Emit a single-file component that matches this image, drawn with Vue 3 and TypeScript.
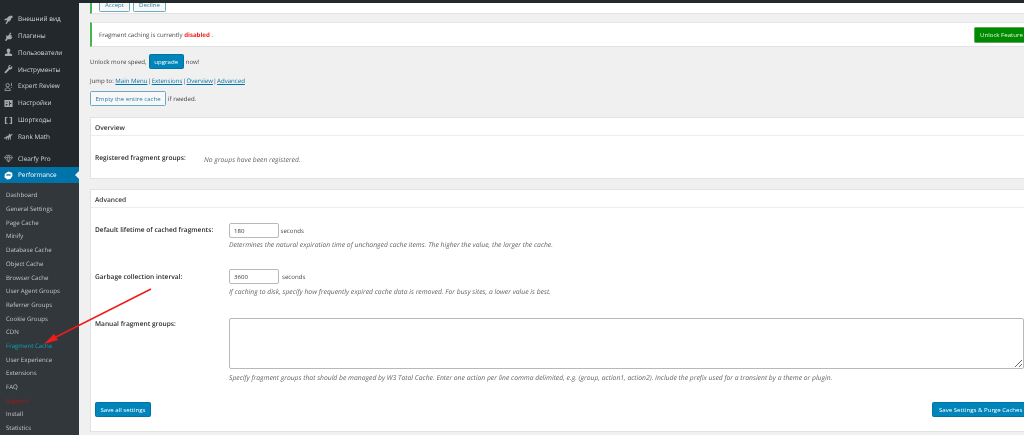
<script setup lang="ts">
// top level menu entries, icon is the key of an svg drawn below
const topMenu = [
  { label: 'Внешний вид', icon: 'brush' },
  { label: 'Плагины', icon: 'plug' },
  { label: 'Пользователи', icon: 'user' },
  { label: 'Инструменты', icon: 'wrench' },
  { label: 'Expert Review', icon: 'expert' },
  { label: 'Настройки', icon: 'settings' },
  { label: 'Шорткоды', icon: 'brackets' },
  { label: 'Rank Math', icon: 'rank' }
]

const subMenu = [
  'Dashboard', 'General Settings', 'Page Cache', 'Minify', 'Database Cache', 'Object Cache',
  'Browser Cache', 'User Agent Groups', 'Referrer Groups', 'Cookie Groups', 'CDN', 'Fragment Cache',
  'User Experience', 'Extensions', 'FAQ', 'Support', 'Install', 'Statistics'
]
</script>

<template>
  <div class="page">
    <aside class="sidebar">
      <ul class="menu">
        <li v-for="item in topMenu" :key="item.label" class="menu-item">
          <svg class="icon" viewBox="0 0 20 20" fill="#a7aaad">
            <path v-if="item.icon === 'brush'" d="M19 3l-3-2-7 3-2 3-6 2 1 3 4-1 1 2-4 6 3 1 4-6 2 1 1-3 3-1-1-3 4-2z" />
            <path v-else-if="item.icon === 'plug'" d="M13 1l3 1-2 5 4 1-2 3 3 1-4 4H8l-3 4-3-1 3-5V7l4 2 1-3 1 1 2-5z" />
            <path v-else-if="item.icon === 'user'" d="M10 1a4 4 0 0 1 4 4.500c0 2-1 3.700-2 4.300v1.700l6 2.500v4H2v-4l6-2.500V9.800c-1-.6-2-2.300-2-4.300A4 4 0 0 1 10 1z" />
            <path v-else-if="item.icon === 'wrench'" d="M18 2l-3.500 3.500-2-.5-.5-2 3.500-2.500c-3-.8-5.800.6-6 3.500 0 .9 0 1.500.3 2l-7.800 9c-.9 1.200-.8 2.200 0 2.800.8.700 1.800.7 2.700-.2l8.300-8c3 .8 5.500-1.700 5.500-4.700 0-1-.2-2.200-.5-3.400z" />
            <g v-else-if="item.icon === 'expert'" fill="none" stroke="#a7aaad" stroke-width="1.800">
              <circle cx="8" cy="7" r="3.800" />
              <path d="M2 19c0-4 2-6 6-6s6 2 6 6zM16.500 2v7M16.500 11v2" />
            </g>
            <path v-else-if="item.icon === 'settings'" fill-rule="evenodd" d="M1 2h18v16H1zM4 6v2h4V6zm7-1v4h1v1h-1v5h2v-4h3V9h-3V5zM4 11v4h2v-2h2v-2z" />
            <path v-else-if="item.icon === 'brackets'" d="M2 2h6v2H5v12h3v2H2zM12 2h6v16h-6v-2h3V4h-3z" />
            <path v-else-if="item.icon === 'rank'" d="M0 13l5-2 1-3 3 2 3-7 2 3 6-2-5 6v7h-2v-5h-2v5H9v-4H7v4H5v-3l-5 1z" />
          </svg>
          <span>{{ item.label }}</span>
        </li>
        <li class="menu-item clearfy">
          <svg class="icon" viewBox="0 0 20 20" fill="none" stroke="#a7aaad" stroke-width="1.500">
            <path d="M5 3h10l4 5-9 10L1 8zM1 8h18M7 8l3 10 3-10-3-5z" />
          </svg>
          <span>Clearfy Pro</span>
        </li>
        <li class="menu-item current">
          <svg class="icon" viewBox="0 0 20 20" fill="#fff">
            <path d="M10 1l8 3 1 7-5 7-7 1-6-5 1-8zM5 8c3-1 7-1 10 0l-1 3c-3-1-5-1-8 0z" fill-rule="evenodd" />
          </svg>
          <span>Performance</span>
          <i class="caret"></i>
        </li>
      </ul>
      <ul class="submenu">
        <li
          v-for="entry in subMenu"
          :key="entry"
          :class="{ active: entry === 'Fragment Cache', danger: entry === 'Support' }"
        >{{ entry }}</li>
      </ul>
    </aside>

    <main class="content">
      <div class="notice first">
        <div class="notice-buttons">
          <button class="btn-outline">Accept</button>
          <button class="btn-outline">Decline</button>
        </div>
      </div>
      <div class="notice second">
        <p>Fragment caching is currently <b>disabled</b> .</p>
        <button class="btn-green">Unlock Feature</button>
      </div>

      <p class="line unlock"><span>Unlock more speed,</span><button class="btn-primary upgrade">upgrade</button><span>now!</span></p>
      <p class="line jump">Jump to: <a>Main Menu</a> <span class="sep">|</span> <a>Extensions</a> <span class="sep">|</span> <a>Overview</a> <span class="sep">|</span> <a>Advanced</a></p>
      <p class="line empty"><button class="btn-outline wide">Empty the entire cache</button><span>if needed.</span></p>

      <section class="box overview">
        <h3>Overview</h3>
        <div class="overview-row">
          <strong>Registered fragment groups:</strong>
          <em>No groups have been registered.</em>
        </div>
      </section>

      <section class="box advanced">
        <h3>Advanced</h3>
        <div class="row row-lifetime">
          <strong>Default lifetime of cached fragments:</strong>
          <div>
            <div class="field"><input value="180" readonly /> seconds</div>
            <em>Determines the natural expiration time of unchanged cache items. The higher the value, the larger the cache.</em>
          </div>
        </div>
        <div class="row row-gc">
          <strong>Garbage collection interval:</strong>
          <div>
            <div class="field"><input value="3600" readonly /> <span class="unit">seconds</span></div>
            <em>If caching to disk, specify how frequently expired cache data is removed. For busy sites, a lower value is best.</em>
          </div>
        </div>
        <div class="row row-manual">
          <strong>Manual fragment groups:</strong>
          <div>
            <textarea readonly></textarea>
            <em>Specify fragment groups that should be managed by W3 Total Cache. Enter one action per line comma delimited, e.g. (group, action1, action2). Include the prefix used for a transient by a theme or plugin.</em>
          </div>
        </div>
        <div class="actions">
          <button class="btn-primary save">Save all settings</button>
          <button class="btn-primary purge">Save Settings &amp; Purge Caches</button>
        </div>
      </section>
    </main>

    <!-- annotation drawn over the screenshot -->
    <svg class="arrow" width="160" height="70" viewBox="0 0 160 70">
      <path d="M151 3L52 53" stroke="#ee1c1c" stroke-width="1.500" fill="none" />
      <path d="M44 58l10-10 4 6z" fill="#ee1c1c" />
    </svg>
  </div>
</template>

<style>
html, body { margin: 0; background: #f0f0f0; overflow: hidden; }
</style>

<style scoped>
* { box-sizing: border-box; }
.page {
  position: relative;
  display: flex;
  width: 1024px;
  height: 435px;
  overflow: hidden;
  background: #f0f0f0;
  color: #444;
  font-family: "Open Sans", "Noto Sans", sans-serif;
  font-size: 6.1px;
  text-rendering: geometricPrecision;
  filter: blur(0.4px);
}
p, ul, h3 { margin: 0; padding: 0; }
ul { list-style: none; }

.sidebar {
  flex: none;
  width: 79px;
  height: 435px;
  overflow: hidden;
  background: #23282d;
  color: #d5d7d9;
  padding-top: 11px;
}
.menu-item {
  position: relative;
  display: flex;
  align-items: center;
  gap: 5px;
  height: 16.800px;
  padding-left: 4px;
  font-size: 6.400px;
  line-height: 1;
}
.icon { flex: none; width: 9px; height: 9px; }
.clearfy { margin-top: 5px; height: 17px; }
.current {
  height: 16px;
  background: #0073aa;
  color: #fff;
}
.caret {
  position: absolute;
  right: 0;
  top: 4px;
  border: 4px solid transparent;
  border-right-color: #f0f0f0;
  border-left-width: 0;
}
.submenu {
  background: #32373c;
  padding: 5px 0 0 6px;
  height: 300px;
}
.submenu li {
  height: 13.700px;
  line-height: 13.700px;
  font-size: 6.100px;
  color: #c3c5c7;
  white-space: nowrap;
}
.submenu .active { color: #0fa3b5; }
.submenu .danger { color: #b01515; }

.content {
  flex: none;
  width: 951px;
  padding: 0 0 0 11px;
  border-top: 3px solid #23282d;
}
.notice {
  display: flex;
  align-items: center;
  justify-content: space-between;
  background: #fff;
  border-left: 2px solid #46b450;
  border-bottom: 1px solid #e2e2e2;
}
.first { height: 11px; margin-bottom: 8px; overflow: hidden; }
.notice-buttons { display: flex; gap: 3px; margin: -7px 0 0 7px; }
.second { height: 25px; border-top: 1px solid #e6e6e6; padding-left: 7px; }
.second b { color: #f21f1f; }
button {
  font: inherit;
  padding: 0;
  border-radius: 1.500px;
  white-space: nowrap;
}
.btn-outline {
  height: 14px;
  padding: 0 5px;
  background: #f7f7f7;
  border: 1px solid #6ba9c4;
  color: #2a7ea8;
}
.btn-green {
  width: 56px;
  height: 16px;
  padding-left: 5px;
  text-align: left;
  background: #008a00;
  border: 1px solid #5da65d;
  color: #e6f3e6;
}
.btn-primary {
  height: 15px;
  padding: 0 5.500px;
  background: #0085ba;
  border: 1px solid #0073aa;
  color: #fff;
}
.line { display: flex; align-items: center; }
.unlock { margin-top: 7px; height: 15px; gap: 2px; }
.upgrade { width: 35px; padding: 0; }
.jump { display: block; margin-top: 6px; height: 11px; line-height: 11px; }
.jump a { color: #0073aa; text-decoration: underline; }
.sep { margin: 0 -1.200px; }
.empty { margin-top: 5px; height: 15px; gap: 2px; }
.wide { height: 15px; width: 76px; padding: 0; }

.box {
  background: #fff;
  border: 1px solid #e2e2e2;
}
.box h3 {
  height: 18px;
  line-height: 19px;
  padding-left: 4px;
  font-size: 6.600px;
  font-weight: 600;
  color: #333;
  border-bottom: 1px solid #eee;
}
.overview { margin-top: 11px; height: 62px; }
.overview-row { display: flex; align-items: flex-start; padding: 17px 0 0 4px; }
.overview-row strong { width: 109px; }
.overview-row em { margin-top: 2px; }
strong { font-size: 6.600px; font-weight: 600; color: #23282d; }
em { color: #666; font-size: 6.770px; display: block; white-space: nowrap; }
.advanced { margin-top: 10px; height: 243px; }
.row {
  display: grid;
  grid-template-columns: 134px 1fr;
  padding-left: 4px;
}
.row-lifetime { margin-top: 15px; }
.row-gc { margin-top: 20px; }
.row-manual { margin-top: 22px; }
.row-lifetime strong { padding-top: 2px; }
.row-gc strong { padding-top: 3px; }
.row-manual strong { padding-top: 1px; }
.field { display: flex; align-items: center; gap: 1.500px; height: 15px; }
.field input {
  width: 50px;
  height: 15px;
  font: inherit;
  padding: 0 4px;
  border: 1px solid #b4b9be;
  border-radius: 2px;
  color: #32373c;
  background: #fff;
  outline: none;
}
.unit { margin-left: 1.500px; }
.row-lifetime em { margin-top: 2px; }
.row-gc em { margin-top: 3px; }
textarea {
  display: block;
  width: 795px;
  height: 51px;
  border: 1px solid #b4b9be;
  border-radius: 2px;
  background: #fff;
  outline: none;
}
.row-manual em { margin-top: 4px; }
.actions {
  display: flex;
  justify-content: space-between;
  margin-top: 20px;
  padding: 0 0 0 4px;
}
.save { width: 56px; padding: 0; }
.purge { width: 97px; padding-left: 6px; text-align: left; }

.arrow {
  position: absolute;
  left: 0;
  top: 286px;
  pointer-events: none;
}
</style>
